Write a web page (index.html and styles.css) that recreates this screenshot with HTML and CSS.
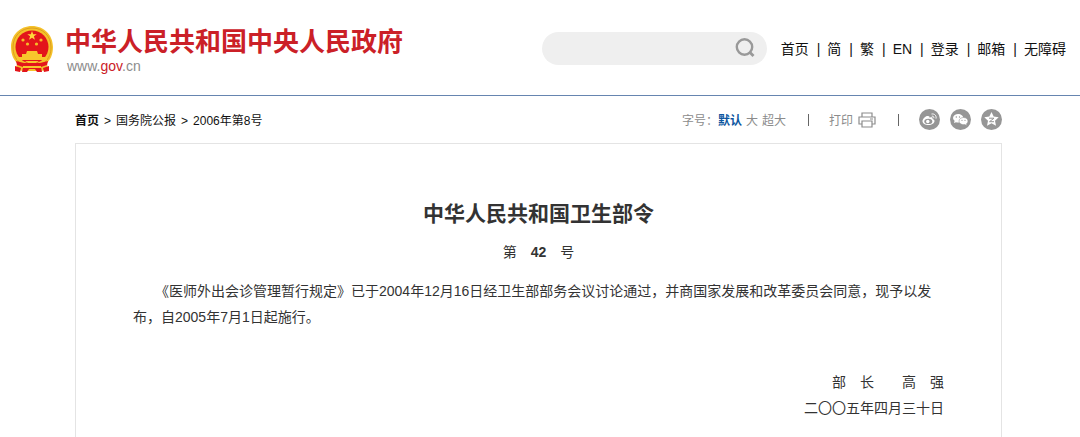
FILE: index.html
```
<!DOCTYPE html>
<html lang="zh-CN">
<head>
  <meta charset="UTF-8">
  <meta name="viewport" content="width=device-width, initial-scale=1.0">
  <title>中华人民共和国卫生部令</title>
  <link rel="stylesheet" href="styles.css">
</head>
<body>

<header class="header">
  <a class="logo" href="#">
    <svg class="emblem" viewBox="0 0 44 48" aria-hidden="true">
      <path d="M22 2C10 2 1 11 1 23c0 8 3 13 6 16l-1 7 8 1h16l8-1-1-7c3-3 6-8 6-16C43 11 34 2 22 2z" fill="#f5c22b"/>
      <path d="M22 4C11 4 3 12 3 23c0 7 2 11 6 15" fill="none" stroke="#dd9f1c"/>
      <path d="M22 4c11 0 19 8 19 19 0 7-2 11-6 15" fill="none" stroke="#dd9f1c"/>
      <circle cx="22" cy="23" r="16.5" fill="#e3151b"/>
      <path d="M22 7l1.200 3.200h3.500l-2.800 2.100 1 3.400-2.900-2-2.900 2 1-3.400-2.800-2.100h3.500z" fill="#ffd83b"/>
      <g fill="#f6bd28">
        <circle cx="13" cy="16" r="1.6"/>
        <circle cx="17.500" cy="20" r="1.6"/>
        <circle cx="26.500" cy="20" r="1.6"/>
        <circle cx="31" cy="16" r="1.6"/>
      </g>
      <path d="M17 27h10l1 3h4v3H12v-3h4z" fill="#f8c62c"/>
      <path d="M7 33h30v3H7z" fill="#f8c62c"/>
      <path d="M6 37l8 2h16l8-2-1 4-6 2 1 5h-5l-2-3h-6l-2 3h-5l1-5-6-2z" fill="#e3151b"/>
      <path d="M15 37h14l-3 2h-8z" fill="#f8c62c"/>
      <path d="M5 42l6 2-1 4-5-1zM39 42l-6 2 1 4 5-1z" fill="#e3151b"/>
      <path d="M13 42h18v2H13z" fill="#f8c62c"/>
    </svg>
    <span class="logo-text">
      <strong class="logo-name">中华人民共和国中央人民政府</strong>
      <span class="logo-url">www.<em>gov</em>.cn</span>
    </span>
  </a>

  <form class="search">
    <input type="text" aria-label="搜索">
    <button type="button" aria-label="搜索">
      <svg viewBox="0 0 20 20" aria-hidden="true">
        <circle cx="9.500" cy="9" r="7.700" fill="none" stroke="#999" stroke-width="2.400"/>
        <path d="M14.500 14l4 4" stroke="#999" stroke-width="2.800"/>
      </svg>
    </button>
  </form>

  <nav class="top-nav">
    <a href="#">首页</a><span>|</span><a href="#">简</a><span>|</span><a href="#">繁</a><span>|</span><a href="#">EN</a><span>|</span><a href="#">登录</a><span>|</span><a href="#">邮箱</a><span>|</span><a href="#">无障碍</a>
  </nav>
</header>

<main class="main">
  <div class="toolbar">
    <div class="crumbs">
      <a class="home" href="#">首页</a>
      <span>&gt;</span>
      <a href="#">国务院公报</a>
      <span>&gt;</span>
      <a href="#">2006年第8号</a>
    </div>
    <div class="tools">
      <div class="font-size">
        <span>字号：</span>
        <button type="button" class="active">默认</button>
        <button type="button">大</button>
        <button type="button">超大</button>
      </div>
      <span class="bar"></span>
      <button type="button" class="print">打印
        <svg viewBox="0 0 18 16" fill="none" stroke="#8c8c8c" stroke-width="1.200" aria-hidden="true">
          <path d="M4 5V1h10v4M4 12H1V5h16v7h-3"/>
          <path d="M4 9h10v6H4zM12 7h3"/>
        </svg>
      </button>
      <span class="bar"></span>
      <div class="share">
        <a href="#" aria-label="微博">
          <svg viewBox="0 0 21 21" aria-hidden="true">
            <circle cx="10.500" cy="10.500" r="10.500" fill="#969696"/>
            <path d="M9 7c-2-.5-5.500 2.500-5.500 5.200 0 2.300 2.800 3.800 6 3.800 3.500 0 6-1.900 6-4 0-1.300-1-1.900-2-2.100.5-1.500-.6-2.100-3-1.100C10.800 8 10.300 7 9 7z" fill="#fff"/>
            <ellipse cx="9.300" cy="12.400" rx="4" ry="2.600" fill="#969696"/>
            <circle cx="8.800" cy="12.500" r="1.700" fill="#fff"/>
            <path d="M12.500 5c3-.5 5.200 1.700 4.500 4.600M12.800 7.200c1.500-.2 2.300.7 2 2" fill="none" stroke="#fff"/>
          </svg>
        </a>
        <a href="#" aria-label="微信">
          <svg viewBox="0 0 21 21" aria-hidden="true">
            <circle cx="10.500" cy="10.500" r="10.500" fill="#969696"/>
            <path d="M4 14l.6-2.300C1.400 9.300 3.700 5 8 5c3 0 5.300 1.900 5.300 4.200S11 13.500 8 13.500c-.7 0-1.400-.1-2-.3z" fill="#fff"/>
            <path d="M16.800 16.500l-2-.9c-3.300.6-5.800-1.200-5.800-3.500 0-2 2-3.600 4.500-3.600s4.500 1.600 4.500 3.600c0 1.100-.6 2-1.500 2.700z" fill="#fff" stroke="#969696" stroke-width=".6"/>
            <g fill="#969696"><circle cx="6.300" cy="8" r=".7"/><circle cx="9.500" cy="8" r=".7"/><circle cx="12" cy="11.300" r=".6"/><circle cx="15" cy="11.300" r=".6"/></g>
          </svg>
        </a>
        <a href="#" aria-label="QQ空间">
          <svg viewBox="0 0 21 21" aria-hidden="true">
            <circle cx="10.500" cy="10.500" r="10.500" fill="#969696"/>
            <path d="M10.500 3l2.200 4.600 5 .6-3.700 3.500 1 5-4.500-2.500L6 16.700l1-5-3.700-3.500 5-.6z" fill="#fff"/>
            <path d="M8 9.200h5l-4.500 3.500H13" fill="none" stroke="#969696"/>
          </svg>
        </a>
      </div>
    </div>
  </div>

  <article class="article">
    <h1>中华人民共和国卫生部令</h1>
    <p class="number">第　<b>42</b>　号</p>
    <p class="text">《医师外出会诊管理暂行规定》已于2004年12月16日经卫生部部务会议讨论通过，并商国家发展和改革委员会同意，现予以发布，自2005年7月1日起施行。</p>
    <p class="sign">部　长　　高　强<br>二〇〇五年四月三十日</p>
  </article>
</main>

</body>
</html>
```
FILE: styles.css
```
* {
  box-sizing: border-box;
}
body {
  margin: 0;
  background: #fff;
  color: #333;
  font-family: "Liberation Sans", "Noto Sans CJK SC", sans-serif;
  font-size: 14px;
}
a {
  color: inherit;
  text-decoration: none;
}
button {
  padding: 0;
  border: none;
  background: none;
  color: inherit;
  font: inherit;
  cursor: pointer;
}
svg {
  display: block;
}

/* header */
.header {
  display: flex;
  align-items: center;
  padding: 22px 14px 21px 10px;
  border-bottom: 1px solid #6685b0;
}
.logo {
  display: flex;
  align-items: center;
  gap: 11px;
  margin-right: auto;
}
.emblem {
  width: 44px;
  height: 48px;
}
.logo-text {
  display: flex;
  flex-direction: column;
  padding-top: 4px;
}
.logo-name {
  color: #cb2027;
  font-size: 26px;
  line-height: 32px;
}
.logo-url {
  padding-left: 2px;
  color: #8c8c8c;
  line-height: 16px;
}
.logo-url em {
  color: #cb2027;
  font-style: normal;
}
.search {
  display: flex;
  align-items: center;
  width: 225px;
  height: 33px;
  margin-right: 14px;
  padding: 0 12px 0 16px;
  border-radius: 17px;
  background: #efefef;
}
.search input {
  flex: 1;
  min-width: 0;
  border: none;
  outline: none;
  background: transparent;
  font: inherit;
}
.search svg {
  width: 20px;
  height: 20px;
}
.top-nav {
  color: #111;
  white-space: nowrap;
}
.top-nav span {
  margin: 0 7px 0 8px;
}

/* content */
.main {
  margin: 0 78px 0 75px;
}
.toolbar {
  display: flex;
  align-items: center;
  justify-content: space-between;
  height: 47px;
  font-size: 12px;
}
.crumbs {
  display: flex;
  align-items: baseline;
  gap: 5px;
  color: #111;
}
.crumbs .home {
  font-weight: bold;
}
.tools {
  display: flex;
  align-items: center;
  color: #8c8c8c;
}
.font-size {
  display: flex;
  gap: 4px;
}
.font-size span {
  margin-right: -4px;
}
.font-size .active {
  color: #0c56a0;
  font-weight: bold;
}
.bar {
  width: 1px;
  height: 12px;
  margin: 0 20px 0 22px;
  background: #666;
}
.print {
  display: flex;
  align-items: center;
  gap: 5px;
}
.print svg {
  width: 18px;
  height: 16px;
}
.share {
  display: flex;
  gap: 10px;
}
.share svg {
  width: 21px;
  height: 21px;
}
.article {
  min-height: calc(100vh - 143px);
  padding: 56px 57px 12px;
  border: 1px solid #e4e4e4;
  border-bottom: none;
  line-height: 26px;
}
.article h1 {
  margin: 0 0 11px;
  font-size: 21px;
  line-height: 28px;
  text-align: center;
}
.article p {
  margin: 0 0 13px;
}
.article .number {
  text-align: center;
}
.article .text {
  margin-bottom: 39px;
  text-indent: 22px;
}
.article .sign {
  margin-bottom: 0;
  text-align: right;
}
```
